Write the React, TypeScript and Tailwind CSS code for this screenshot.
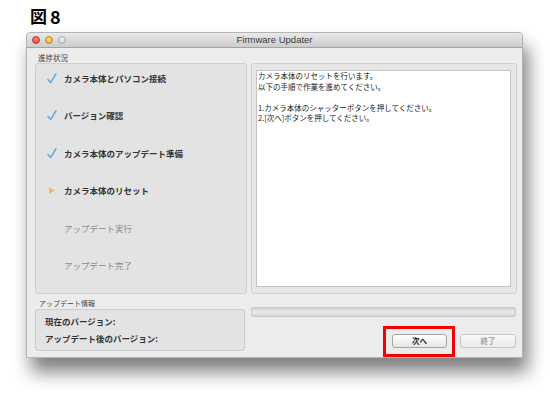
import React from "react"

const jp = "font-['Noto_Sans_CJK_JP','Noto_Sans',sans-serif]"

type Step = { label: string; state: "done" | "current" | "todo" }

const steps: Step[] = [
  { label: "カメラ本体とパソコン接続", state: "done" },
  { label: "バージョン確認", state: "done" },
  { label: "カメラ本体のアップデート準備", state: "done" },
  { label: "カメラ本体のリセット", state: "current" },
  { label: "アップデート実行", state: "todo" },
  { label: "アップデート完了", state: "todo" },
]

function StepIcon({ state }: { state: Step["state"] }) {
  if (state === "done") {
    return (
      <svg width="10" height="11" viewBox="0 0 10 11">
        <path d="M1 6.5 L3.6 9.6 L8.8 1" fill="none" stroke="#5fa9d8" strokeWidth="1.5" strokeLinecap="round" strokeLinejoin="round" />
      </svg>
    )
  }
  if (state === "current") {
    return (
      <svg width="10" height="11" viewBox="0 0 10 11">
        <path d="M2 2 L8 5.5 L2 9 Z" fill="#f4b866" />
      </svg>
    )
  }
  return <span className="w-[10px]" />
}

export default function App() {
  return (
    <div className={`w-[550px] h-[396px] bg-white relative ${jp}`}>
      <div className="pl-[30px] pt-[6px] h-[32px] flex items-start text-[17px] leading-[20px] font-bold text-black">
        <span>図</span>
        <span className="ml-[3px] text-[18px]">8</span>
      </div>

      {/* window */}
      <div className="ml-[26px] w-[497px] h-[326px] flex flex-col bg-[#ececec] rounded-t-[4px] border border-[#b5b5b5] shadow-[5px_14px_18px_rgba(0,0,0,0.5)]">
        {/* title bar */}
        <div className="relative h-[15px] shrink-0 flex items-center justify-center rounded-t-[4px] bg-gradient-to-b from-[#e9e9e9] to-[#cdcdcd] border-b border-[#a3a3a3]">
          <div className="absolute left-[5px] top-[3px] flex gap-[5px]">
            <span className="w-[8px] h-[8px] rounded-full bg-[radial-gradient(circle_at_50%_35%,#ff8c82,#d8352b)] border border-[#b23a30]" />
            <span className="w-[8px] h-[8px] rounded-full bg-[radial-gradient(circle_at_50%_35%,#ffd88a,#e2a425)] border border-[#c08a22]" />
            <span className="w-[8px] h-[8px] rounded-full bg-[radial-gradient(circle_at_50%_35%,#f4f4f4,#c8c8c8)] border border-[#a9a9a9]" />
          </div>
          <span className="font-['Liberation_Sans',sans-serif] text-[9.5px] text-[#3a3a3a] leading-none">
            Firmware Updater
          </span>
        </div>

        {/* body */}
        <div className="flex gap-[4px] pl-[8px]">
          {/* left column */}
          <div className="w-[212px] flex flex-col">
            <div className="h-[15px] flex items-end pl-[3px] pb-[2px] text-[7.5px] leading-none text-[#444]">
              進捗状況
            </div>
            <div className="h-[231px] bg-[#e3e3e3] border border-[#cfcfcf] rounded-[3px] pt-[8px] pl-[11px] flex flex-col gap-[25.5px]">
              {steps.map((s) => (
                <div key={s.label} className="h-[12px] flex items-center gap-[7px]">
                  <StepIcon state={s.state} />
                  <span
                    className={
                      s.state === "todo"
                        ? "text-[8.5px] leading-none text-[#8a8a8a]"
                        : "text-[8.5px] leading-none font-semibold text-[#333]"
                    }
                  >
                    {s.label}
                  </span>
                </div>
              ))}
            </div>
            <div className="h-[15px] flex items-end pl-[4px] pb-[2px] text-[7px] leading-none text-[#444]">
              アップデート情報
            </div>
            <div className="h-[42px] w-[210px] bg-[#e3e3e3] border border-[#cfcfcf] rounded-[3px] pl-[9px] pt-[7px] flex flex-col gap-[8px] text-[8.5px] leading-[9px] font-semibold text-[#333]">
              <span>現在のバージョン:</span>
              <span>アップデート後のバージョン:</span>
            </div>
          </div>

          {/* right column */}
          <div className="w-[266px] flex flex-col">
            <div className="h-[15px]" />
            <div className="h-[231px] bg-[#e6e6e6] border border-[#cfcfcf] rounded-[3px] pt-[6px] pb-[6px] pl-[4px] pr-[5px]">
              <div className="h-full bg-white border border-[#c4c4c4] px-[1px] text-[7.5px] leading-[10.5px] text-[#222]">
                <p>カメラ本体のリセットを行います。</p>
                <p>以下の手順で作業を進めてください。</p>
                <p>&nbsp;</p>
                <p>1.カメラ本体のシャッターボタンを押してください。</p>
                <p>2.[次へ]ボタンを押してください。</p>
              </div>
            </div>
            <div className="mt-[13px] h-[10px] w-[265px] rounded-[2px] border border-[#c9c9c9] bg-gradient-to-b from-[#d2d2d2] via-[#e9e9e9] to-[#d6d6d6]" />
            <div className="mt-[17px] flex items-start justify-end gap-[13px] pr-[1px]">
              <div className="relative flex">
                <div className="absolute -left-[9px] -right-[8px] -top-[8px] -bottom-[9px] border-[3px] border-[#f00000]" />
                <button className="w-[55px] h-[14px] rounded-[3px] border border-[#a5a5a5] bg-gradient-to-b from-white to-[#e6e6e6] text-[7.5px] leading-none font-semibold text-[#222]">
                  次へ
                </button>
              </div>
              <button className="w-[56px] h-[14px] rounded-[3px] border border-[#c6c6c6] bg-gradient-to-b from-[#f8f8f8] to-[#ececec] text-[7.5px] leading-none font-semibold text-[#a5a5a5]">
                終了
              </button>
            </div>
          </div>
        </div>
      </div>
    </div>
  )
}
